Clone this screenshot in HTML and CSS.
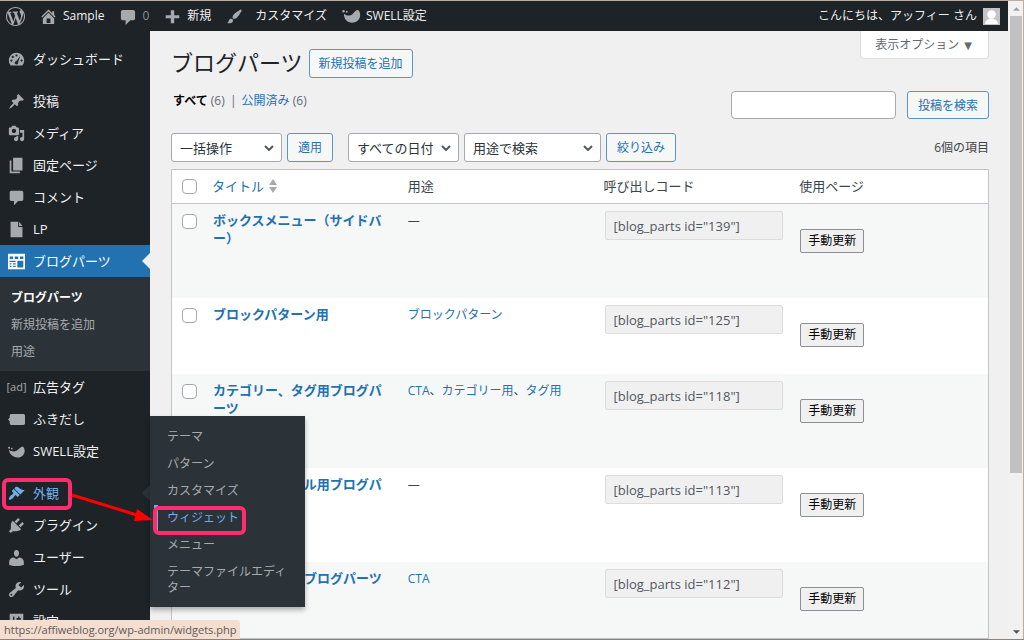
FILE: index.html
```html
<!DOCTYPE html>
<html lang="ja">
<head>
<meta charset="utf-8">
<title>ブログパーツ</title>
<link rel="stylesheet" href="styles.css">
</head>
<body>
<div class="window">
  <div class="page">
    <header class="adminbar">
      <a class="bar-logo" href="#" aria-label="WordPress"><svg class="icon-lg" viewBox="0 0 20 20"><path d="M20 10c0-5.51-4.49-10-10-10C4.48 0 0 4.49 0 10c0 5.52 4.48 10 10 10 5.51 0 10-4.48 10-10zM7.78 15.37L4.37 6.22c.55-.02 1.17-.08 1.17-.08.5-.06.44-1.13-.06-1.11 0 0-1.45.11-2.37.11-.18 0-.37 0-.58-.01C4.12 2.69 6.87 1.11 10 1.11c2.33 0 4.45.87 6.05 2.34-.68-.11-1.65.39-1.65 1.58 0 .74.45 1.36.9 2.1.35.61.55 1.36.55 2.46 0 1.49-1.4 5-1.4 5l-3.03-8.37c.54-.02.82-.17.82-.17.5-.05.44-1.25-.06-1.22 0 0-1.44.12-2.38.12-.87 0-2.33-.12-2.33-.12-.5-.03-.56 1.2-.06 1.22l.92.08 1.26 3.41zM17.41 10c.24-.64.74-1.87.43-4.25.7 1.29 1.05 2.71 1.05 4.25 0 3.29-1.73 6.24-4.4 7.78.97-2.59 1.94-5.2 2.92-7.78zM6.1 18.09C3.12 16.65 1.11 13.53 1.11 10c0-1.3.23-2.48.72-3.59C3.25 10.3 4.67 14.2 6.1 18.09zm4.03-6.63l2.58 6.98c-.86.29-1.76.45-2.71.45-.79 0-1.57-.11-2.29-.33.81-2.38 1.62-4.74 2.42-7.1z"/></svg></a>
      <a class="bar-item" href="#"><svg class="icon" viewBox="1 1 18 18"><path d="M16 8.500l1.530 1.530-1.060 1.060L10 4.600l-6.470 6.490-1.060-1.060L10 2.500l4 4v-2h2v4zm-6-2.460l6 5.990V18H4v-5.970zM12 17v-5H8v5h4z"/></svg><span>Sample</span></a>
      <a class="bar-item bar-count" href="#"><svg class="icon" viewBox="0 0 18 18"><path d="M4 2h11c1.100 0 2 .9 2 2v7c0 1.100-.9 2-2 2h-3l-5 5v-5H4c-1.100 0-2-.9-2-2V4c0-1.100.9-2 2-2z"/></svg><span>0</span></a>
      <a class="bar-item" href="#"><svg class="icon" viewBox="0 0 20 20"><path d="M18 8.500v3.500h-6v6H8v-6H2V8.500h6v-6h4v6z"/></svg><span>新規</span></a>
      <a class="bar-item bar-wide" href="#"><svg class="icon" viewBox="0 1 20 18"><path d="M18.330 3.570s.27-.8-.31-1.360c-.53-.52-1.220-.24-1.220-.24-.61.300-5.760 3.470-7.670 5.570-.86.960-2.060 3.790-1.090 4.820.92.980 3.960-.17 4.790-1 2.060-2.060 5.210-7.170 5.500-7.790zM1.400 17.650c2.370-1.560 1.460-3.410 3.230-4.640.93-.65 2.220-.62 3.080.29.63.67.8 2.570-.16 3.460-1.570 1.450-4 1.550-6.150.89z"/></svg><span>カスタマイズ</span></a>
      <a class="bar-item bar-swell" href="#"><svg class="icon-lg" viewBox="0 0 20 20"><path d="M2 7c3 2.500 6.500 2.500 9 .5 2-1.800 3-3.500 5.500-4.500C18.500 4 19.500 7 19 10c-.8 4-4 6.500-8.500 6.500C5.500 16.500 2 12.500 2 7z"/><circle cx="1.600" cy="4.500" r="1.300"/><circle cx="5" cy="5" r="1"/></svg><span>SWELL設定</span></a>
      <a class="account" href="#"><span>こんにちは、アッフィー さん</span><svg class="avatar" viewBox="0 0 16 16"><rect width="16" height="16" fill="#c3c4c7"/><circle cx="8" cy="6" r="4" fill="#fff"/><path d="M2 15c0-3 2-4 4-5h4c2 1 4 2 4 5z" fill="#fff"/></svg></a>
    </header>
    <div class="layout">
      <nav class="sidebar">
        <ul class="menu">
          <li><a class="menu-link" href="#"><svg class="icon" viewBox="0 0 20 20"><path fill-rule="evenodd" d="M3.200 17h13.600C18.200 15.500 19 13.500 19 11.300 19 6.200 15 2.200 10 2.200S1 6.200 1 11.300C1 13.500 1.800 15.500 3.200 17zM10 4a1.300 1.300 0 110 2.600A1.300 1.300 0 0110 4zM5.600 5.700a1.300 1.300 0 110 2.600 1.300 1.300 0 010-2.600zM4 10a1.300 1.300 0 110 2.600A1.300 1.300 0 014 10zm12 0a1.300 1.300 0 110 2.600 1.300 1.300 0 010-2.600zm-1.500-4.500L12 13c.5 1.500-.5 3-2 3s-2.500-1.500-1.800-3c.4-.8 1-1 1.800-1.200z"/></svg>ダッシュボード</a></li>
          <li class="group"><a class="menu-link" href="#"><svg class="icon" viewBox="0 0 20 20"><path d="M10.440 3.020l1.820-1.820 6.360 6.350-1.830 1.820c-1.050-.68-2.480-.57-3.410.36l-.75.75c-.92.93-1.040 2.350-.35 3.410l-1.830 1.820-2.410-2.410-2.800 2.790c-.42.420-3.380 2.710-3.800 2.290s1.860-3.390 2.280-3.810l2.790-2.790L4.100 9.360l1.830-1.820c1.050.69 2.480.57 3.400-.36l.75-.75c.93-.92 1.050-2.350.36-3.410z"/></svg>投稿</a></li>
          <li><a class="menu-link" href="#"><svg class="icon" viewBox="0 0 20 20"><path d="M13 11V4c0-.55-.45-1-1-1h-1.670L9 1H5L3.670 3H2c-.55 0-1 .45-1 1v7c0 .55.45 1 1 1h10c.55 0 1-.45 1-1zM7 4.500c1.380 0 2.500 1.120 2.500 2.500S8.380 9.500 7 9.500 4.500 8.380 4.500 7 5.620 4.500 7 4.500zM14 6h5v10.500c0 1.380-1.120 2.500-2.500 2.500S14 17.880 14 16.500s1.120-2.500 2.500-2.500c.17 0 .34.020.5.050V9h-3V6zm-4 8.050V13h2v3.500c0 1.380-1.120 2.500-2.500 2.500S7 17.880 7 16.500 8.120 14 9.500 14c.17 0 .34.020.5.050z"/></svg>メディア</a></li>
          <li><a class="menu-link" href="#"><svg class="icon" viewBox="0 0 20 20"><path d="M6 16V1h11v15H6zm-1 1h9v2H2V4h2v13z"/></svg>固定ページ</a></li>
          <li><a class="menu-link" href="#"><svg class="icon" viewBox="0 0 20 20"><path d="M4 2h12c1.100 0 2 .9 2 2v8c0 1.100-.9 2-2 2h-4l-5 5v-5H4c-1.100 0-2-.9-2-2V4c0-1.100.9-2 2-2z"/></svg>コメント</a></li>
          <li><a class="menu-link" href="#"><svg class="icon" viewBox="0 0 20 20"><path d="M3 1h9v6h5v12H3zM13 1l4 5h-4z"/></svg>LP</a></li>
          <li class="current"><a class="menu-link" href="#"><svg class="icon" viewBox="0 0 20 20"><path fill-rule="evenodd" d="M0 1h20v18H0zM2 4v3h4V4zm6 0v3h4V4zm6 0v3h4V4zM2 9v1.500h7V9zm0 3v1.500h2V12zm4 0v1.500h3V12zm-4 3v1.500h2V15zm4 0v1.500h3V15zm5-6v8h7V9z"/></svg>ブログパーツ</a>
            <ul class="submenu">
              <li><a class="selected" href="#">ブログパーツ</a></li>
              <li><a href="#">新規投稿を追加</a></li>
              <li><a href="#">用途</a></li>
            </ul>
          </li>
          <li><a class="menu-link" href="#"><span class="icon ad-icon">[ad]</span>広告タグ</a></li>
          <li><a class="menu-link" href="#"><svg class="icon" viewBox="0 0 20 20"><path d="M4 3.500h14c1.200 0 2 .8 2 2v9c0 1.200-.8 2-2 2H4c-1.200 0-2-.8-2-2V12l-2-2 2-2V5.500c0-1.200.8-2 2-2z"/></svg>ふきだし</a></li>
          <li><a class="menu-link" href="#"><svg class="icon" viewBox="0 0 20 20"><path d="M1 8c3 2.500 7 2.500 10 .5 2-1.800 3-3.500 6-4.500 2 1 3 3.500 2.500 6.500-.8 4-4 6.500-8.500 6.500-5 0-9-3.500-10-9z"/><circle cx="1.300" cy="5.500" r="1.200"/><circle cx="4.500" cy="6.500" r="1"/></svg>SWELL設定</a></li>
          <li class="group hovered"><a class="menu-link" href="#"><svg class="icon" viewBox="0 0 20 20"><path d="M14.480 11.060L7.410 3.990l1.500-1.500c.5-.56 2.300-.47 3.510.32 1.210.8 1.430 1.280 2.910 2.100 1.180.64 2.450 1.260 4.450.85zm-.71.71L6.700 4.700 4.930 6.470c-.39.39-.39 1.020 0 1.410l1.060 1.060c.39.39.39 1.030 0 1.420-.6.600-1.430 1.110-2.210 1.690-.35.260-.7.530-1.010.84C1.430 14.230.4 16.080 1.400 17.070c.99 1 2.840-.03 4.180-1.360.31-.31.58-.66.85-1.020.57-.78 1.080-1.610 1.690-2.210.39-.39 1.020-.39 1.410 0l1.060 1.060c.39.39 1.020.39 1.410 0z"/></svg>外観</a>
            <ul class="flyout">
              <li><a href="#">テーマ</a></li>
              <li><a href="#">パターン</a></li>
              <li><a href="#">カスタマイズ</a></li>
              <li><a class="active" href="#">ウィジェット</a></li>
              <li><a href="#">メニュー</a></li>
              <li><a href="#">テーマファイルエディター</a></li>
            </ul>
          </li>
          <li><a class="menu-link" href="#"><svg class="icon" viewBox="1 1 18 18"><path d="M13.110 4.360L9.870 7.600 8 5.730l3.240-3.240c.35-.34 1.050-.2 1.560.32.52.51.66 1.210.31 1.550zm-8 1.770l.91-1.120 9.010 9.010-1.190.84c-.71.710-2.630 1.160-3.820 1.160H6.140L4.900 17.260c-.59.590-1.540.59-2.120 0-.59-.58-.59-1.530 0-2.120l1.240-1.240v-3.880c0-1.130.4-3.190 1.090-3.890zm7.260 3.970l3.240-3.240c.34-.35 1.040-.21 1.550.31.52.51.66 1.210.31 1.550l-3.240 3.250z"/></svg>プラグイン</a></li>
          <li><a class="menu-link" href="#"><svg class="icon" viewBox="1 1 18 18"><path d="M10 9.250c-2.270 0-2.730-3.440-2.730-3.440C7 4.020 7.820 2 9.970 2c2.160 0 2.980 2.020 2.710 3.810 0 0-.41 3.440-2.680 3.440zm0 2.570L12.720 10c2.890 0 5.020 2.330 5.020 4.530v3.490s-4.150 1.130-7.740 1.130c-3.650 0-7.740-1.130-7.740-1.130v-3.490C2.260 12.280 4.200 10 7.230 10z"/></svg>ユーザー</a></li>
          <li><a class="menu-link" href="#"><svg class="icon" viewBox="1 1 18 18"><path d="M16.680 9.770c-1.340 1.340-3.300 1.670-4.950.99l-5.410 6.520c-.99.990-2.590.99-3.580 0s-.99-2.590 0-3.570l6.520-5.420c-.68-1.650-.35-3.610.99-4.950 1.280-1.280 3.120-1.620 4.720-1.060l-2.890 2.890 2.820 2.820 2.860-2.870c.53 1.580.18 3.390-1.080 4.650zM3.810 16.210c.4.390 1.040.39 1.430 0 .4-.4.4-1.040 0-1.430-.39-.4-1.030-.4-1.430 0-.39.390-.39 1.030 0 1.430z"/></svg>ツール</a></li>
          <li><a class="menu-link" href="#"><svg class="icon" viewBox="0 0 20 20"><path fill-rule="evenodd" d="M2 1h16v18H2zM6 4v5H4v2h2v5h1.500v-5H9V9H7.500V4zm6 0v2h-2v2h5V6h-1.500V4z"/></svg>設定</a></li>
        </ul>
      </nav>
      <main class="content">
        <div class="heading">
          <div class="title-row"><h1>ブログパーツ</h1><a class="button" href="#">新規投稿を追加</a></div>
          <button class="screen-options" type="button">表示オプション <span class="caret">▼</span></button>
        </div>
        <div class="views">
          <div class="view-links"><a class="on" href="#">すべて</a> <span>(6)</span> <i>|</i> <a href="#">公開済み</a> <span>(6)</span></div>
          <div class="search"><input type="search" aria-label="投稿を検索"><button class="button" type="button">投稿を検索</button></div>
        </div>
        <div class="tablenav">
          <div class="nav-group"><select class="sel-md" aria-label="一括操作"><option>一括操作</option></select><button class="button" type="button">適用</button></div>
          <div class="nav-group"><select class="sel-md" aria-label="日付で絞り込む"><option>すべての日付</option></select><select class="sel-lg" aria-label="用途で検索"><option>用途で検索</option></select><button class="button" type="button">絞り込み</button></div>
          <span class="count">6個の項目</span>
        </div>
        <table class="list">
          <thead>
            <tr>
              <th class="check"><input type="checkbox" aria-label="すべて選択"></th>
              <th><a class="sort" href="#">タイトル<svg class="sorter" viewBox="0 0 8 14"><path d="M4 0l4 6H0zM4 14l4-6H0z"/></svg></a></th>
              <th>用途</th><th>呼び出しコード</th><th>使用ページ</th>
            </tr>
          </thead>
          <tbody>
            <tr><td class="check"><input type="checkbox" aria-label="ボックスメニューを選択"></td><td class="name"><a href="#">ボックスメニュー（サイドバー）</a></td><td class="use">—</td><td><input class="code" type="text" readonly aria-label="呼び出しコード 139" value='[blog_parts id="139"]'></td><td><button class="update" type="button">手動更新</button></td></tr>
            <tr><td class="check"><input type="checkbox" aria-label="ブロックパターン用を選択"></td><td class="name"><a href="#">ブロックパターン用</a></td><td class="use"><a href="#">ブロックパターン</a></td><td><input class="code" type="text" readonly aria-label="呼び出しコード 125" value='[blog_parts id="125"]'></td><td><button class="update" type="button">手動更新</button></td></tr>
            <tr><td class="check"><input type="checkbox" aria-label="カテゴリー、タグ用を選択"></td><td class="name"><a href="#">カテゴリー、タグ用ブログパーツ</a></td><td class="use"><a href="#">CTA</a>、<a href="#">カテゴリー用</a>、<a href="#">タグ用</a></td><td><input class="code" type="text" readonly aria-label="呼び出しコード 118" value='[blog_parts id="118"]'></td><td><button class="update" type="button">手動更新</button></td></tr>
            <tr><td class="check"><input type="checkbox" aria-label="プロフィール用を選択"></td><td class="name"><a href="#">著者プロフィール用ブログパーツ</a></td><td class="use">—</td><td><input class="code" type="text" readonly aria-label="呼び出しコード 113" value='[blog_parts id="113"]'></td><td><button class="update" type="button">手動更新</button></td></tr>
            <tr><td class="check"><input type="checkbox" aria-label="お問い合わせ用を選択"></td><td class="name"><a href="#">お問い合わせ用ブログパーツ</a></td><td class="use"><a href="#">CTA</a></td><td><input class="code" type="text" readonly aria-label="呼び出しコード 112" value='[blog_parts id="112"]'></td><td><button class="update" type="button">手動更新</button></td></tr>
          </tbody>
        </table>
      </main>
    </div>
  </div>
  <div class="scrollbar"><span class="arrow"><svg viewBox="0 0 8 4"><path d="M4 0l4 4H0z" fill="#a0a0a0"/></svg></span><div class="thumb"></div><span class="arrow"><svg viewBox="0 0 8 4"><path d="M0 0h8L4 4z" fill="#505050"/></svg></span></div>
  <div class="status">https://affiweblog.org/wp-admin/widgets.php</div>
  <svg class="marks" width="260" height="80" viewBox="0 0 260 80">
    <g fill="none" stroke="#ff2d6f" stroke-width="4"><rect x="4" y="10" width="66" height="28" rx="4"/><rect x="155" y="38" width="89" height="25" rx="4"/></g>
    <path d="M72 25L137 45" stroke="#f00" stroke-width="3"/><path d="M137 39L153 50L134 51z" fill="#f00"/>
  </svg>
</div>
</body>
</html>
```
FILE: styles.css
```css
* { box-sizing: border-box; }
body {
  margin: 0;
  color: #3c434a;
  background: #f0f0f1;
  font: 13px/18px "Open Sans", "Noto Sans CJK JP", sans-serif;
}
a { color: #2271b1; text-decoration: none; }
ul { list-style: none; margin: 0; padding: 0; }
button, input, select { font: inherit; margin: 0; }
svg { display: block; }

.window {
  position: relative;
  display: flex;
  height: 100vh;
  overflow: hidden;
  border-top: 1px solid #b9aca2;
  border-bottom: 1px solid #8b837d;
}
.page { flex: 1; min-width: 0; display: flex; flex-direction: column; }

.adminbar {
  display: flex;
  align-items: center;
  flex: none;
  height: 30px;
  padding: 0 8px 0 6px;
  background: #1d2327;
  font-size: 12px;
}
.adminbar a { display: flex; align-items: center; color: #f0f0f1; }
.icon { width: 17px; height: 17px; fill: #a7aaad; flex: none; }
.icon-lg { width: 19px; height: 19px; fill: #a7aaad; flex: none; }
.adminbar .bar-item { gap: 6px; margin-left: 15px; }
.adminbar .bar-count { color: #8c8f94; }
.adminbar .bar-wide { gap: 12px; }
.adminbar .bar-swell { gap: 5px; }
.adminbar .account { margin-left: auto; gap: 6px; }
.avatar { width: 17px; height: 17px; }

.layout { flex: 1; min-height: 0; display: flex; }
.sidebar { width: 150px; flex: none; padding-top: 12px; background: #1d2327; }
.menu > li { position: relative; }
.group { margin-top: 10px; }
.menu-link {
  display: flex;
  align-items: center;
  gap: 8px;
  height: 32px;
  padding-left: 8px;
  color: #f0f0f1;
}
.ad-icon {
  display: flex;
  align-items: center;
  justify-content: center;
  color: #a7aaad;
  font-size: 11px;
}
.current > .menu-link { background: #2271b1; color: #fff; }
.current .icon { fill: #fff; }
.current > .menu-link::after,
.hovered > .menu-link::after {
  content: "";
  position: absolute;
  right: 0;
  top: 8px;
  border: 8px solid transparent;
  border-left: 0;
  border-right-color: #f0f0f1;
}
.hovered > .menu-link::after { border-right-color: #2c3338; }
.submenu { padding: 7px 0 6px; background: #2c3338; font-size: 12px; }
.submenu a { display: block; padding: 0 11px; line-height: 27px; color: #a7aaad; }
.submenu .selected { color: #fff; font-weight: 700; }
.hovered > .menu-link { color: #72aee6; }
.hovered .icon { fill: #72aee6; }
.flyout {
  position: absolute;
  z-index: 2;
  left: 100%;
  top: -61px;
  width: 155px;
  padding: 8px 0 5px;
  background: #2c3338;
  box-shadow: 0 3px 5px rgba(0, 0, 0, .3);
  font-size: 12px;
}
.flyout a {
  display: block;
  padding: 5px 12px 6px 17px;
  line-height: 16px;
  color: #a7aaad;
  line-break: anywhere;
}
.flyout .active { color: #72aee6; box-shadow: inset 4px 0 #2c3338, inset 8px 0 #72aee6; }

.content { flex: 1; min-width: 0; padding: 0 19px 0 21px; }
.heading { display: flex; justify-content: space-between; align-items: flex-start; }
.title-row { display: flex; align-items: center; gap: 6px; padding-top: 18px; }
h1 { margin: 0; padding-bottom: 3px; font-size: 22px; line-height: 26px; font-weight: 400; color: #1d2327; }
.button {
  height: 29px;
  padding: 0 9px;
  border: 1px solid #5a96c8;
  border-radius: 3px;
  background: #f6f7f7;
  color: #2271b1;
  font-size: 12px;
  line-height: 27px;
  white-space: nowrap;
}
.screen-options {
  height: 28px;
  padding: 0 14px;
  border: 1px solid #dcdcde;
  border-top: 0;
  border-radius: 0 0 4px 4px;
  background: #fff;
  color: #646970;
  font-size: 12px;
}
.caret { font: 10px "DejaVu Sans", sans-serif; margin: 0 2px; }
.views { display: flex; justify-content: space-between; margin-top: 13px; }
.view-links { padding-left: 2px; line-height: 20px; font-size: 12px; color: #646970; }
.view-links i { font-style: normal; padding: 0 2px; }
.view-links .on { color: #000; font-weight: 700; }
.view-links span { font-size: 12px; }
.search { display: flex; gap: 11px; }
.search input {
  width: 165px;
  height: 28px;
  border: 1px solid #a5a8ac;
  border-radius: 4px;
  background: #fff;
}
.search .button { height: 28px; padding: 0 10px; }
.tablenav { display: flex; align-items: center; gap: 15px; margin: 14px 0 7px; }
.nav-group { display: flex; gap: 5px; }
.tablenav .button { padding: 0 10px; }
.tablenav select {
  height: 29px;
  padding: 0 20px 0 8px;
  border: 1px solid #a5a8ac;
  border-radius: 3px;
  appearance: none;
  color: #2c3338;
  background: #fff url("data:image/svg+xml,%3Csvg xmlns='http://www.w3.org/2000/svg' viewBox='0 0 10 6'%3E%3Cpath d='M1 1l4 4 4-4' fill='none' stroke='%2350575e' stroke-width='2'/%3E%3C/svg%3E") no-repeat right 7px center / 10px 6px;
}
.tablenav .sel-md { width: 111px; }
.tablenav .sel-lg { width: 137px; }
.count { margin-left: auto; font-size: 12px; }

.list {
  width: 100%;
  table-layout: fixed;
  border-spacing: 0;
  border: 1px solid #c3c4c7;
  background: #fff;
}
.list th { height: 34px; padding: 0 7px 2px; border-bottom: 1px solid #c3c4c7; text-align: left; font-weight: 400; }
.list .check { width: 33px; padding: 10px 0 0 10px; }
.list th.check { padding-top: 0; }
.list td { padding: 7px 10px 0 8px; vertical-align: top; }
.list tbody tr:nth-child(odd) { background: #f6f7f7; }
.sort { display: flex; align-items: center; gap: 5px; }
.sorter { width: 8px; height: 14px; fill: #a7aaad; }
.check input {
  appearance: none;
  display: block;
  width: 15px;
  height: 15px;
  border: 1px solid #a5a8ac;
  border-radius: 4px;
  background: #fff;
}
.list .name { padding-bottom: 51px; line-break: anywhere; font-weight: 700; }
.list .name a { display: block; }
.list .use { padding-top: 8px; padding-left: 7px; font-size: 12px; white-space: nowrap; }
.list .code {
  display: block;
  width: 178px;
  height: 29px;
  padding: 0 8px;
  border: 1px solid #dcdcde;
  border-radius: 2px;
  background: #f0f0f1;
  color: #50575e;
}
.update {
  display: block;
  height: 24px;
  margin-top: 18px;
  padding: 0 7px;
  border: 1px solid #8c8f94;
  border-radius: 2px;
  background: #f0f0f0;
  color: #000;
  font-size: 12px;
  line-height: 22px;
}

.scrollbar {
  display: flex;
  flex-direction: column;
  flex: none;
  width: 16px;
  padding: 0 1px 0 2px;
  border-right: 1px solid #b9aca2;
  background: #f1f1f1;
}
.arrow { display: flex; justify-content: center; align-items: center; height: 15px; flex: none; }
.arrow svg { width: 7px; height: 4px; }
.thumb { height: 457px; background: #c1c1c1; margin-bottom: auto; }
.status {
  position: absolute;
  z-index: 3;
  left: 0;
  bottom: 0;
  width: 240px;
  padding: 1px 4px 0;
  border-top-right-radius: 3px;
  background: #f5ddcf;
  color: #5f5a57;
  font-size: 11px;
  white-space: nowrap;
}
.marks { position: absolute; z-index: 4; left: 0; top: 469px; }
```
